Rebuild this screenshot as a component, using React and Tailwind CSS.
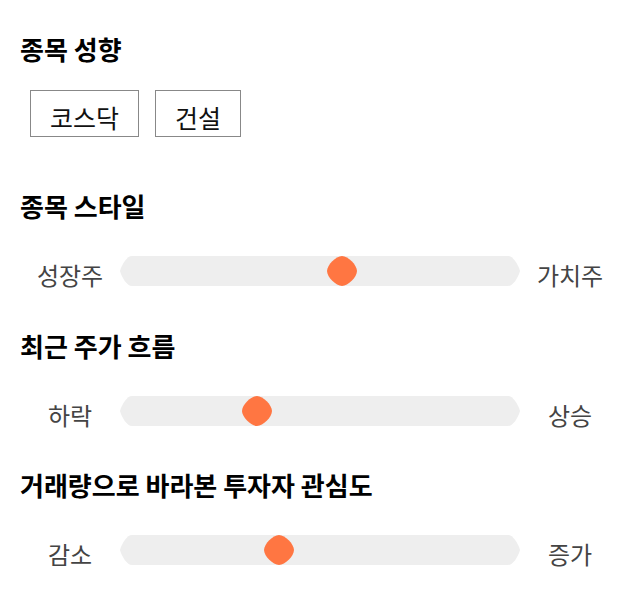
import { useState } from "react";

const sliders = [
  { title: "종목 스타일", left: "성장주", right: "가치주", value: 56, gap: "mt-[54px]" },
  { title: "최근 주가 흐름", left: "하락", right: "상승", value: 33, gap: "mt-[45px]" },
  { title: "거래량으로 바라본 투자자 관심도", left: "감소", right: "증가", value: 39, gap: "mt-[44px]" },
];

function Thumb({ value }) {
  // track is 400 wide, thumb 30 -> travel of 370
  return (
    <svg
      width="30"
      height="30"
      viewBox="0 0 30 30"
      className="absolute top-0"
      style={{ left: `${(value / 100) * 370}px` }}
    >
      <path
        d="M15 0C21 0 30 9 30 15C30 21 21 30 15 30C9 30 0 21 0 15C0 9 9 0 15 0Z"
        fill="#ff7642"
      />
    </svg>
  );
}

function Slider({ left, right, value }) {
  return (
    <div className="flex h-[30px] px-[20px]">
      <span className="w-[100px] mt-[4px] text-center text-[24px] leading-[30px] text-[#444]">
        {left}
      </span>
      <div className="relative w-[400px] h-[30px]">
        <svg width="400" height="30" viewBox="0 0 400 30" className="block">
          <path
            d="M12 0H388C393 0 398 8 400 15C398 22 393 30 388 30H12C7 30 2 22 0 15C2 8 7 0 12 0Z"
            fill="#eeeeee"
          />
        </svg>
        <Thumb value={value} />
      </div>
      <span className="w-[100px] mt-[4px] text-center text-[24px] leading-[30px] text-[#444]">
        {right}
      </span>
    </div>
  );
}

export default function App() {
  const [tags] = useState(["코스닥", "건설"]);

  return (
    <div
      className="w-[640px] h-[606px] bg-white pt-[34px] overflow-hidden"
      style={{ fontFamily: '"Noto Sans CJK KR", "Noto Sans", sans-serif' }}
    >
      <h2 className="pl-[20px] text-[26px] leading-[30px] font-bold text-black">종목 성향</h2>

      <div className="flex gap-[16px] pl-[30px] mt-[26px]">
        {tags.map((tag) => (
          <div
            key={tag}
            className="h-[47px] border border-[#888] px-[19px] pt-[11px] pb-[4px] text-[25px] leading-[30px] text-[#111]"
          >
            {tag}
          </div>
        ))}
      </div>

      {sliders.map((s) => (
        <div key={s.title}>
          <h2 className={`${s.gap} pl-[20px] text-[26px] leading-[30px] font-bold text-black`}>
            {s.title}
          </h2>
          <div className="mt-[35px]">
            <Slider left={s.left} right={s.right} value={s.value} />
          </div>
        </div>
      ))}
    </div>
  );
}
